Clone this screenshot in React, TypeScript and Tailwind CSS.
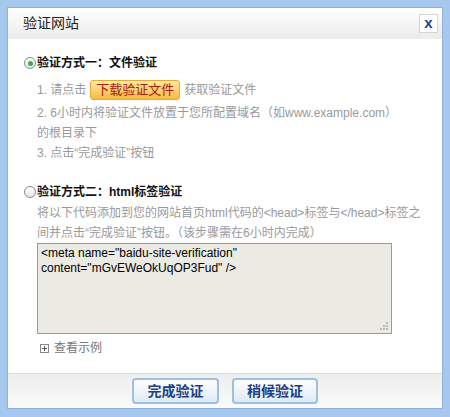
function Radio({ checked }: { checked?: boolean }) {
  return (
    <span className="mr-[1px] flex h-[12px] w-[12px] shrink-0 items-center justify-center rounded-full border border-[#7b8ea3] bg-gradient-to-b from-[#ffffff] to-[#e4e8ec]">
      {checked && <span className="h-[5px] w-[5px] rounded-full bg-[#3fae3a]" />}
    </span>
  )
}

function Grip() {
  return (
    <svg width="10" height="10" viewBox="0 0 10 10" className="absolute bottom-[2px] right-[2px]">
      <rect x="7" y="1" width="2" height="2" fill="#b8b8b0" />
      <rect x="4" y="4" width="2" height="2" fill="#b8b8b0" />
      <rect x="7" y="4" width="2" height="2" fill="#b8b8b0" />
      <rect x="1" y="7" width="2" height="2" fill="#b8b8b0" />
      <rect x="4" y="7" width="2" height="2" fill="#b8b8b0" />
      <rect x="7" y="7" width="2" height="2" fill="#b8b8b0" />
    </svg>
  )
}

function App() {
  const font = { fontFamily: '"Liberation Sans", Arial, "Noto Sans CJK SC", sans-serif' }

  return (
    <div className="h-[417px] w-[450px] bg-[#a6c8ef] px-[7px] pb-[8px] pt-[7px]" style={font}>
      <div className="flex h-full flex-col border border-[#8fb2da] bg-white">
        {/* title bar */}
        <div className="flex h-[31px] shrink-0 items-center justify-between bg-gradient-to-b from-[#ffffff] to-[#ebebeb] pl-[15px] pr-[4px]">
          <span className="text-[14px] text-[#222]">验证网站</span>
          <span className="flex h-[19px] w-[19px] items-center justify-center border border-[#d4d4d4] bg-white pb-[2px] text-[15px] font-bold leading-none text-[#26408f]">
            x
          </span>
        </div>

        {/* body */}
        <div className="flex-1 pl-[16px] pt-[14px] text-[12px]">
          <div className="flex h-[20px] items-center font-bold text-[#111]">
            <Radio checked />
            <span>验证方式一：文件验证</span>
          </div>
          <div className="pl-[13px] text-[#999]">
            <div className="mt-[6px] flex h-[22px] items-center">
              <span>1. 请点击</span>
              <span className="mx-[4px] flex h-[20px] w-[90px] items-center justify-center rounded-[3px] border border-[#e4a93a] bg-gradient-to-b from-[#ffe9a0] to-[#f9b93c] text-[13px] text-[#a4200a]">
                下载验证文件
              </span>
              <span>获取验证文件</span>
            </div>
            <div className="mt-[2px] leading-[20px]">
              2. 6小时内将验证文件放置于您所配置域名（如www.example.com）
              <br />
              的根目录下
            </div>
            <div className="leading-[20px]">3. 点击“完成验证”按钮</div>
          </div>

          <div className="mt-[19px] flex h-[20px] items-center font-bold text-[#111]">
            <Radio />
            <span>验证方式二：html标签验证</span>
          </div>
          <div className="pl-[13px]">
            <div className="mt-[1px] leading-[20px] text-[#999]">
              将以下代码添加到您的网站首页html代码的&lt;head&gt;标签与&lt;/head&gt;标签之
              <br />
              间并点击“完成验证”按钮。（该步骤需在6小时内完成）
            </div>
            <div className="relative h-[91px] w-[355px] border border-[#9a9a9a] bg-[#ebebe4] px-[3px] pt-[2px] text-[12px] leading-[15px] text-black">
              &lt;meta name="baidu-site-verification"
              <br />
              content="mGvEWeOkUqOP3Fud" /&gt;
              <Grip />
            </div>
            <div className="mt-[4px] flex h-[20px] items-center pl-[3px] text-[#777]">
              <span className="mr-[5px] flex h-[9px] w-[9px] items-center justify-center border border-[#888] bg-white">
                <svg width="7" height="7" viewBox="0 0 7 7">
                  <rect x="3" y="1" width="1" height="5" fill="#555" />
                  <rect x="1" y="3" width="5" height="1" fill="#555" />
                </svg>
              </span>
              <span>查看示例</span>
            </div>
          </div>
        </div>

        {/* footer */}
        <div className="flex h-[35px] shrink-0 justify-center gap-[13px] border-t border-[#dedede] bg-gradient-to-b from-[#eeeeee] to-[#f9fafa] pt-[4px]">
          <button className="h-[26px] w-[87px] rounded-[4px] border-2 border-[#9dbfe0] bg-gradient-to-b from-[#ffffff] to-[#dfeaf5] text-[14px] font-bold text-[#1d3f86]">
            完成验证
          </button>
          <button className="h-[26px] w-[86px] rounded-[4px] border-2 border-[#9dbfe0] bg-gradient-to-b from-[#ffffff] to-[#dfeaf5] text-[14px] font-bold text-[#1d3f86]">
            稍候验证
          </button>
        </div>
      </div>
    </div>
  )
}

export default App
